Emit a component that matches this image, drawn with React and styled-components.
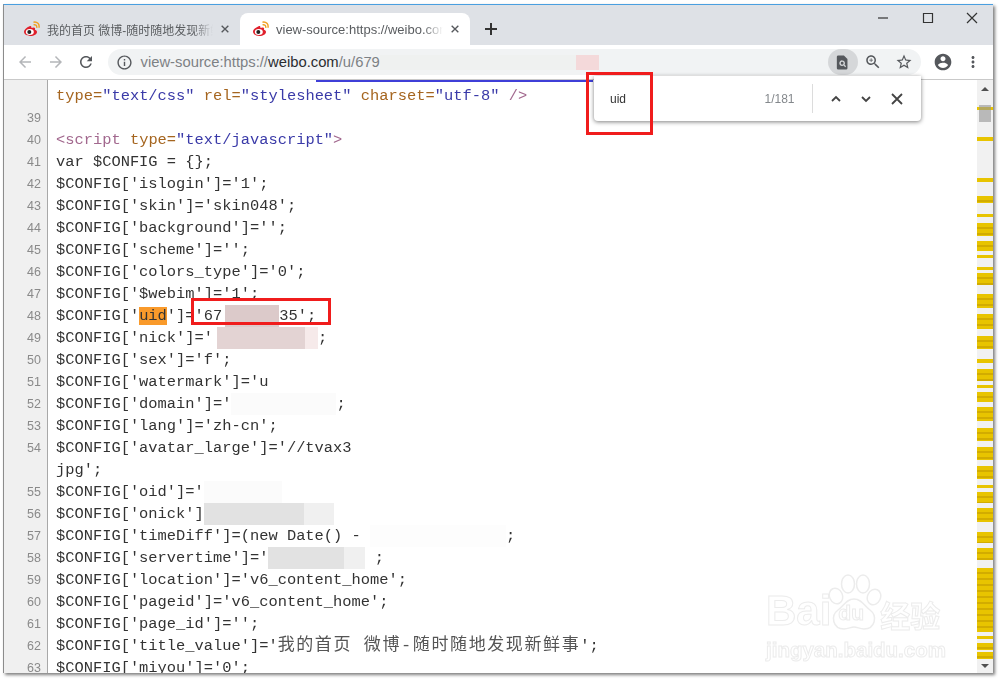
import React from "react";
import styled, { createGlobalStyle } from "styled-components";

const Global = createGlobalStyle`
  html, body {
    margin: 0;
    height: 100%;
    overflow: hidden;
    background: #fff;
  }
`;

const Page = styled.div`
  box-sizing: border-box;
  width: 1000px;
  height: 681px;
  padding: 4px 7px 8px 3px;
  filter: blur(0.45px);
`;

const Window = styled.div`
  position: relative;
  box-sizing: border-box;
  height: 100%;
  display: flex;
  flex-direction: column;
  background: #fff;
  border-top: 1px solid #4a9fe0;
  border-left: 1px solid #8c8c8c;
  box-shadow: 2px 2px 3px rgba(0, 0, 0, 0.5);
  overflow: hidden;
`;

const TabStrip = styled.div`
  height: 40px;
  flex: none;
  display: flex;
  align-items: flex-end;
  padding-left: 9px;
  background: #dee1e6;
`;

const Tab = styled.div`
  width: ${(p) => p.$w}px;
  height: 32px;
  box-sizing: border-box;
  display: flex;
  align-items: center;
  gap: 7px;
  padding: 0 10px 0 ${(p) => (p.$active ? 12 : 10)}px;
  border-radius: 8px 8px 0 0;
  background: ${(p) => (p.$active ? "#fff" : "transparent")};
`;

const TabTitle = styled.span`
  flex: 1;
  overflow: hidden;
  white-space: nowrap;
  font: ${(p) => p.$size || 12}px "Liberation Sans", "Noto Sans CJK SC", sans-serif;
  color: #5a5d60;
  -webkit-mask-image: linear-gradient(90deg, #000 88%, transparent);
  mask-image: linear-gradient(90deg, #000 88%, transparent);
`;

const NewTab = styled.div`
  width: 42px;
  height: 32px;
  display: flex;
  align-items: center;
  justify-content: center;
`;

const WinButtons = styled.div`
  margin-left: auto;
  align-self: flex-start;
  display: flex;
`;

const WinButton = styled.div`
  width: ${(p) => p.$w || 45}px;
  height: 26px;
  display: flex;
  align-items: center;
  justify-content: center;
`;

const Toolbar = styled.div`
  height: 34px;
  flex: none;
  display: flex;
  align-items: center;
  padding-left: 6px;
  background: #fff;
  border-bottom: 1px solid #c9c9c9;
`;

const NavButton = styled.div`
  width: 30.5px;
  display: flex;
  justify-content: center;
`;

const Omnibox = styled.div`
  width: 813px;
  height: 26px;
  margin-left: 6px;
  display: flex;
  align-items: center;
  border-radius: 13px;
  background: #f1f3f4;
  padding-left: 8px;
  box-sizing: border-box;
`;

const Url = styled.span`
  margin-left: 8px;
  font: 14.8px "Liberation Sans", sans-serif;
  white-space: nowrap;
  color: #7d8184;
  b {
    font-weight: 400;
    color: #2b2d30;
  }
`;

const UrlBlur = styled.span`
  width: ${(p) => p.$w}px;
  height: 15px;
  background: ${(p) => p.$tone};
`;

const OmniIcons = styled.div`
  margin-left: auto;
  padding-right: 2px;
  display: flex;
  align-items: center;
`;

const PageAction = styled.div`
  width: ${(p) => p.$w}px;
  height: 26px;
  display: flex;
  align-items: center;
  justify-content: center;
  border-radius: 13px;
  background: ${(p) => p.$bg || "transparent"};
`;

const ToolButton = styled.div`
  width: 30px;
  margin-left: ${(p) => p.$ml || 0}px;
  display: flex;
  justify-content: center;
`;

const Body = styled.div`
  flex: 1;
  min-height: 0;
  display: flex;
`;

const Source = styled.div`
  flex: 1;
  min-width: 0;
  overflow: hidden;
`;

const Row = styled.div`
  height: ${(p) => p.$h || 22}px;
  display: flex;
`;

const LineNo = styled.div`
  flex: none;
  width: 37px;
  padding-right: 6px;
  background: #f0f0f0;
  border-right: 1px solid #a8a8a8;
  text-align: right;
  font: 12.5px/22px "Liberation Sans", sans-serif;
  color: #8a8a8a;
`;

const Code = styled.div`
  padding-left: 8px;
  white-space: pre;
  font: 15.4px/22px "Liberation Mono", "Noto Sans CJK SC", monospace;
  color: #333;
`;

const LinkStrip = styled.div`
  width: 277px;
  height: 2px;
  margin: 0 0 0 268px;
  background: #3f3fd8;
`;

const Attr = styled.span`
  color: #a5651f;
`;

const Value = styled.span`
  color: #3a3aa8;
`;

const Tag = styled.span`
  color: #a2688e;
`;

const Hit = styled.span`
  background: #f99a2b;
  color: #333;
`;

const Cjk = styled.span`
  font-size: 17px;
  letter-spacing: 1.6px;
  color: #555;
`;

const Blur = styled.span`
  display: inline-block;
  width: ${(p) => p.$w}px;
  height: 22px;
  vertical-align: top;
  background: ${(p) => p.$tone || "#fff"};
`;

const Scrollbar = styled.div`
  position: relative;
  flex: none;
  width: 16px;
  background: #f1f1f1;
  display: flex;
  flex-direction: column;
  overflow: hidden;
`;

const ScrollArrow = styled.div`
  flex: none;
  height: ${(p) => p.$h}px;
  margin-top: ${(p) => (p.$down ? "auto" : "0")};
  display: flex;
  align-items: center;
  justify-content: center;
  &::before {
    content: "";
    border-left: 4px solid transparent;
    border-right: 4px solid transparent;
    ${(p) => (p.$down ? "border-top" : "border-bottom")}: 4px solid #505050;
  }
`;

const Mark = styled.div`
  flex: none;
  height: ${(p) => p.$h}px;
  background: repeating-linear-gradient(180deg, #e8c400 0 4px, #d2ac00 4px 6px);
`;

const Gap = styled.div`
  flex: none;
  height: ${(p) => p.$h}px;
`;

const Thumb = styled.div`
  position: absolute;
  top: 25px;
  left: 2px;
  width: 12px;
  height: 17px;
  background: rgba(150, 150, 150, 0.62);
`;

const FindBar = styled.div`
  position: absolute;
  top: 71px;
  left: 590px;
  width: 327px;
  height: 45px;
  box-sizing: border-box;
  display: flex;
  align-items: center;
  padding: 0 9px 0 16px;
  background: #fff;
  border-radius: 0 0 4px 4px;
  box-shadow: 0 1px 4px rgba(0, 0, 0, 0.5);
`;

const FindText = styled.span`
  font: 12px "Liberation Sans", sans-serif;
  color: #333;
`;

const FindCount = styled.span`
  margin-left: auto;
  font: 12px "Liberation Sans", sans-serif;
  color: #84888c;
`;

const FindDivider = styled.div`
  width: 1px;
  height: 29px;
  margin: 0 8px 0 17px;
  background: #dcdcdc;
`;

const FindButton = styled.div`
  width: 30.5px;
  display: flex;
  justify-content: center;
`;

const RedBox = styled.div`
  position: absolute;
  box-sizing: border-box;
  top: ${(p) => p.$top}px;
  left: ${(p) => p.$left}px;
  width: ${(p) => p.$w}px;
  height: ${(p) => p.$h}px;
  border: 3px solid #f01c1c;
`;

const Watermark = styled.div`
  position: absolute;
  top: 567px;
  left: 762px;
  width: 184px;
  display: flex;
  flex-direction: column;
`;

const MarkRow = styled.div`
  height: 60px;
  display: flex;
  align-items: flex-end;
`;

const MarkWord = styled.span`
  font: 700 ${(p) => p.$size}px/1 "Liberation Sans", "Noto Sans CJK SC", sans-serif;
  color: #fff;
  -webkit-text-stroke: 1px #ececec;
`;

const Paw = styled.div`
  position: relative;
  width: 56px;
  height: 58px;
  margin: 0 -2px 0 -5px;
  flex: none;
`;

const PawText = styled.span`
  position: absolute;
  left: 12px;
  bottom: 9px;
  font: 700 21px/1 "Liberation Sans", sans-serif;
  color: #fff;
  -webkit-text-stroke: 1px #ececec;
`;

const MarkUrl = styled.div`
  margin-top: 6px;
  font: 700 20.5px/24px "Liberation Sans", sans-serif;
  color: #fff;
  -webkit-text-stroke: 1px #ececec;
  white-space: nowrap;
`;

const Icon = ({ d, size = 18, color = "#5f6368" }) => (
  <svg width={size} height={size} viewBox="0 0 24 24" fill={color}>
    <path d={d} />
  </svg>
);

const Stroke = ({ d, size = 12, color = "#444", w = 2 }) => (
  <svg width={size} height={size} viewBox="0 0 12 12" fill="none" stroke={color} strokeWidth={w}>
    <path d={d} />
  </svg>
);

const Weibo = () => (
  <svg width="17" height="16" viewBox="0 0 17 16">
    <path d="M6.6 5.2C3.6 6.4 1 8.6 1 10.8c0 2.4 3 4.2 6.4 4.2 3.8 0 6.6-2 6.6-4 0-1.3-1.2-1.9-2.1-2.2.5-1.3.2-2.2-1.2-2.3-.8 0-1.6.3-2.3.6.3-1.4-.3-2.7-1.8-1.9z" fill="#e0202c" />
    <ellipse cx="6.8" cy="10.9" rx="4" ry="3" fill="#fff" />
    <circle cx="6.3" cy="11" r="2" fill="#222" />
    <path d="M10.6 3.8c2-.5 3.6 1 3.1 3M10.5 1.2c3.6-.8 6.4 2 5.4 5.6" fill="none" stroke="#f0a020" strokeWidth="1.4" />
  </svg>
);

const ICONS = {
  back: "M20 11H7.83l5.59-5.59L12 4l-8 8 8 8 1.41-1.41L7.83 13H20v-2z",
  forward: "M12 4l-1.41 1.41L16.17 11H4v2h12.17l-5.58 5.59L12 20l8-8z",
  reload: "M17.65 6.35C16.2 4.9 14.21 4 12 4c-4.42 0-7.99 3.58-7.99 8s3.57 8 7.99 8c3.73 0 6.84-2.55 7.73-6h-2.08c-.82 2.33-3.04 4-5.65 4-3.31 0-6-2.69-6-6s2.69-6 6-6c1.66 0 3.14.69 4.22 1.78L13 11h7V4l-2.35 2.35z",
  info: "M11 7h2v2h-2zm0 4h2v6h-2zm1-9C6.48 2 2 6.48 2 12s4.48 10 10 10 10-4.48 10-10S17.52 2 12 2zm0 18c-4.41 0-8-3.59-8-8s3.59-8 8-8 8 3.59 8 8-3.59 8-8 8z",
  zoom: "M15.5 14h-.79l-.28-.27C15.41 12.59 16 11.11 16 9.5 16 5.91 13.09 3 9.5 3S3 5.91 3 9.5 5.91 16 9.5 16c1.61 0 3.09-.59 4.23-1.57l.27.28v.79l5 4.99L20.49 19l-4.99-5zm-6 0C7.01 14 5 11.99 5 9.5S7.01 5 9.5 5 14 7.01 14 9.5 11.99 14 9.5 14zm2.5-4h-2v2H9v-2H7V9h2V7h1v2h2v1z",
  star: "M22 9.24l-7.19-.62L12 2 9.19 8.63 2 9.24l5.46 4.73L5.82 21 12 17.27 18.18 21l-1.63-7.03L22 9.24zM12 15.4l-3.76 2.27 1-4.28-3.32-2.88 4.38-.38L12 6.1l1.71 4.04 4.38.38-3.32 2.88 1 4.28L12 15.4z",
  account: "M12 2C6.48 2 2 6.48 2 12s4.48 10 10 10 10-4.48 10-10S17.52 2 12 2zm0 3c1.66 0 3 1.34 3 3s-1.34 3-3 3-3-1.34-3-3 1.34-3 3-3zm0 14.2c-2.5 0-4.71-1.28-6-3.22.03-1.99 4-3.08 6-3.08 1.99 0 5.97 1.09 6 3.08-1.29 1.94-3.5 3.22-6 3.22z",
  more: "M12 8c1.1 0 2-.9 2-2s-.9-2-2-2-2 .9-2 2 .9 2 2 2zm0 2c-1.1 0-2 .9-2 2s.9 2 2 2 2-.9 2-2-.9-2-2-2zm0 6c-1.1 0-2 .9-2 2s.9 2 2 2 2-.9 2-2-.9-2-2-2z",
  doc: "M6 2h8l5 5v13a2 2 0 0 1-2 2H6a2 2 0 0 1-2-2V4a2 2 0 0 1 2-2zm5.5 7a4 4 0 1 0 2.1 7.4l2.2 2.2 1.3-1.3-2.2-2.2A4 4 0 0 0 11.5 9zm0 2a2 2 0 1 1 0 4 2 2 0 0 1 0-4z",
};

const LINES = [
  { n: "", code: <><Attr>type=</Attr><Value>"text/css"</Value> <Attr>rel=</Attr><Value>"stylesheet"</Value> <Attr>charset=</Attr><Value>"utf-8"</Value> <Tag>/&gt;</Tag></> },
  { n: 39, code: "" },
  { n: 40, code: <><Tag>&lt;script</Tag> <Attr>type=</Attr><Value>"text/javascript"</Value><Tag>&gt;</Tag></> },
  { n: 41, code: "var $CONFIG = {};" },
  { n: 42, code: "$CONFIG['islogin']='1';" },
  { n: 43, code: "$CONFIG['skin']='skin048';" },
  { n: 44, code: "$CONFIG['background']='';" },
  { n: 45, code: "$CONFIG['scheme']='';" },
  { n: 46, code: "$CONFIG['colors_type']='0';" },
  { n: 47, code: "$CONFIG['$webim']='1';" },
  { n: 48, code: <>$CONFIG['<Hit>uid</Hit>']='67<Blur $w={3} /><Blur $w={54} $tone="#dccaca" />35';</> },
  { n: 49, code: <>$CONFIG['nick']='<Blur $w={4} /><Blur $w={88} $tone="#e3d3d3" /><Blur $w={13} $tone="#f6eaea" />;</> },
  { n: 50, code: "$CONFIG['sex']='f';" },
  { n: 51, code: "$CONFIG['watermark']='u" },
  { n: 52, code: <>$CONFIG['domain']='<Blur $w={105} $tone="#fbfbfb" />;</> },
  { n: 53, code: "$CONFIG['lang']='zh-cn';" },
  { n: 54, code: "$CONFIG['avatar_large']='//tvax3" },
  { n: "", code: "jpg';" },
  { n: 55, code: <>$CONFIG['oid']='<Blur $w={78} $tone="#fbfbfb" /></> },
  { n: 56, code: <>$CONFIG['onick']<Blur $w={100} $tone="#e2e2e2" /><Blur $w={30} $tone="#f0f0f0" /></> },
  { n: 57, code: <>$CONFIG['timeDiff']=(new Date() - <Blur $w={136} $tone="#fdfdfd" />;</> },
  { n: 58, code: <>$CONFIG['servertime']='<Blur $w={76} $tone="#e2e2e2" /><Blur $w={21} $tone="#f0f0f0" /> ;</> },
  { n: 59, code: "$CONFIG['location']='v6_content_home';" },
  { n: 60, code: "$CONFIG['pageid']='v6_content_home';" },
  { n: 61, code: "$CONFIG['page_id']='';" },
  { n: 62, code: <>$CONFIG['title_value']='<Cjk>我的首页 微博-随时随地发现新鲜事</Cjk>';</> },
  { n: 63, code: "$CONFIG['miyou']='0';" },
];

// [top, bottom] of each find tick in page pixels
const TICKS = [
  [107, 110], [137, 141], [178, 182], [196, 203], [214, 217], [223, 236], [241, 251],
  [255, 258], [267, 270], [273, 285], [294, 308], [314, 329], [336, 349], [359, 363],
  [369, 381], [385, 388], [392, 402], [407, 421], [428, 441], [447, 460], [466, 479],
  [485, 488], [492, 503], [508, 522], [532, 543], [548, 560], [568, 632], [636, 639],
  [643, 650], [652, 659],
];

const ScrollTrack = () => {
  let y = 98;
  const parts = [];
  TICKS.forEach(([top, bottom]) => {
    parts.push(<Gap key={`g${top}`} $h={top - y} />);
    parts.push(<Mark key={`m${top}`} $h={bottom - top} />);
    y = bottom;
  });
  return parts;
};

export default function App() {
  return (
    <Page>
      <Global />
      <Window>
        <TabStrip>
          <Tab $w={227}>
            <Weibo />
            <TabTitle>我的首页 微博-随时随地发现新鲜事</TabTitle>
            <Stroke d="M2 2l8 8M10 2l-8 8" size={10} color="#55585c" w={1.6} />
          </Tab>
          <Tab $w={230} $active>
            <Weibo />
            <TabTitle $size={13}>view-source:https://weibo.com/u/679</TabTitle>
            <Stroke d="M2 2l8 8M10 2l-8 8" size={10} color="#55585c" w={1.6} />
          </Tab>
          <NewTab>
            <Stroke d="M6 0v12M0 6h12" color="#333" />
          </NewTab>
          <WinButtons>
            <WinButton><Stroke d="M1 6h10" w={1.2} color="#333" /></WinButton>
            <WinButton><Stroke d="M1.5 1.5h9v9h-9z" w={1.2} color="#333" /></WinButton>
            <WinButton $w={43}><Stroke d="M1 1l10 10M11 1l-10 10" w={1.2} color="#333" /></WinButton>
          </WinButtons>
        </TabStrip>
        <Toolbar>
          <NavButton><Icon d={ICONS.back} color="#b4b6b9" /></NavButton>
          <NavButton><Icon d={ICONS.forward} color="#b4b6b9" /></NavButton>
          <NavButton><Icon d={ICONS.reload} color="#55585c" /></NavButton>
          <Omnibox>
            <Icon d={ICONS.info} size={17} color="#55585c" />
            <Url>view-source:https://<b>weibo.com</b>/u/679</Url>
            <UrlBlur $w={196} $tone="#eff1f0" />
            <UrlBlur $w={23} $tone="#f4d9da" />
            <OmniIcons>
              <PageAction $w={30} $bg="#d5d7d9"><Icon d={ICONS.doc} size={17} color="#55585c" /></PageAction>
              <PageAction $w={31}><Icon d={ICONS.zoom} size={18} color="#55585c" /></PageAction>
              <PageAction $w={30}><Icon d={ICONS.star} size={18} color="#55585c" /></PageAction>
            </OmniIcons>
          </Omnibox>
          <ToolButton $ml={7}><Icon d={ICONS.account} size={20} color="#55585c" /></ToolButton>
          <ToolButton><Icon d={ICONS.more} size={18} color="#55585c" /></ToolButton>
        </Toolbar>
        <Body>
          <Source>
            <Row $h={5}>
              <LineNo />
              <LinkStrip />
            </Row>
            {LINES.map((line, i) => (
              <Row key={i}>
                <LineNo>{line.n}</LineNo>
                <Code>{line.code}</Code>
              </Row>
            ))}
          </Source>
          <Scrollbar>
            <ScrollArrow $h={18} />
            <ScrollTrack />
            <ScrollArrow $h={14} $down />
            <Thumb />
          </Scrollbar>
        </Body>
        <FindBar>
          <FindText>uid</FindText>
          <FindCount>1/181</FindCount>
          <FindDivider />
          <FindButton><Stroke d="M2 8l4-4 4 4" w={1.8} /></FindButton>
          <FindButton><Stroke d="M2 4l4 4 4-4" w={1.8} /></FindButton>
          <FindButton><Stroke d="M1 1l10 10M11 1l-10 10" w={1.8} /></FindButton>
        </FindBar>
        <RedBox $top={67} $left={582} $w={67} $h={63} />
        <RedBox $top={293} $left={187} $w={140} $h={27} />
        <Watermark>
          <MarkRow>
            <MarkWord $size={42}>Bai</MarkWord>
            <Paw>
              <svg width="56" height="58" viewBox="0 0 56 58" fill="#fff" stroke="#ececec" strokeWidth="1.5">
                <ellipse cx="10" cy="22" rx="6.5" ry="8" transform="rotate(-25 10 22)" />
                <ellipse cx="22" cy="10" rx="6.5" ry="9" />
                <ellipse cx="37" cy="10" rx="6.5" ry="9" />
                <ellipse cx="48" cy="23" rx="6.5" ry="8" transform="rotate(25 48 23)" />
                <path d="M28 25c8 0 10 7 16 11 8 6 5 19-6 19-4 0-7-2-10-2s-6 2-10 2C7 55 4 42 12 36c6-4 8-11 16-11z" />
              </svg>
              <PawText>du</PawText>
            </Paw>
            <MarkWord $size={30}>经验</MarkWord>
          </MarkRow>
          <MarkUrl>jingyan.baidu.com</MarkUrl>
        </Watermark>
      </Window>
    </Page>
  );
}
